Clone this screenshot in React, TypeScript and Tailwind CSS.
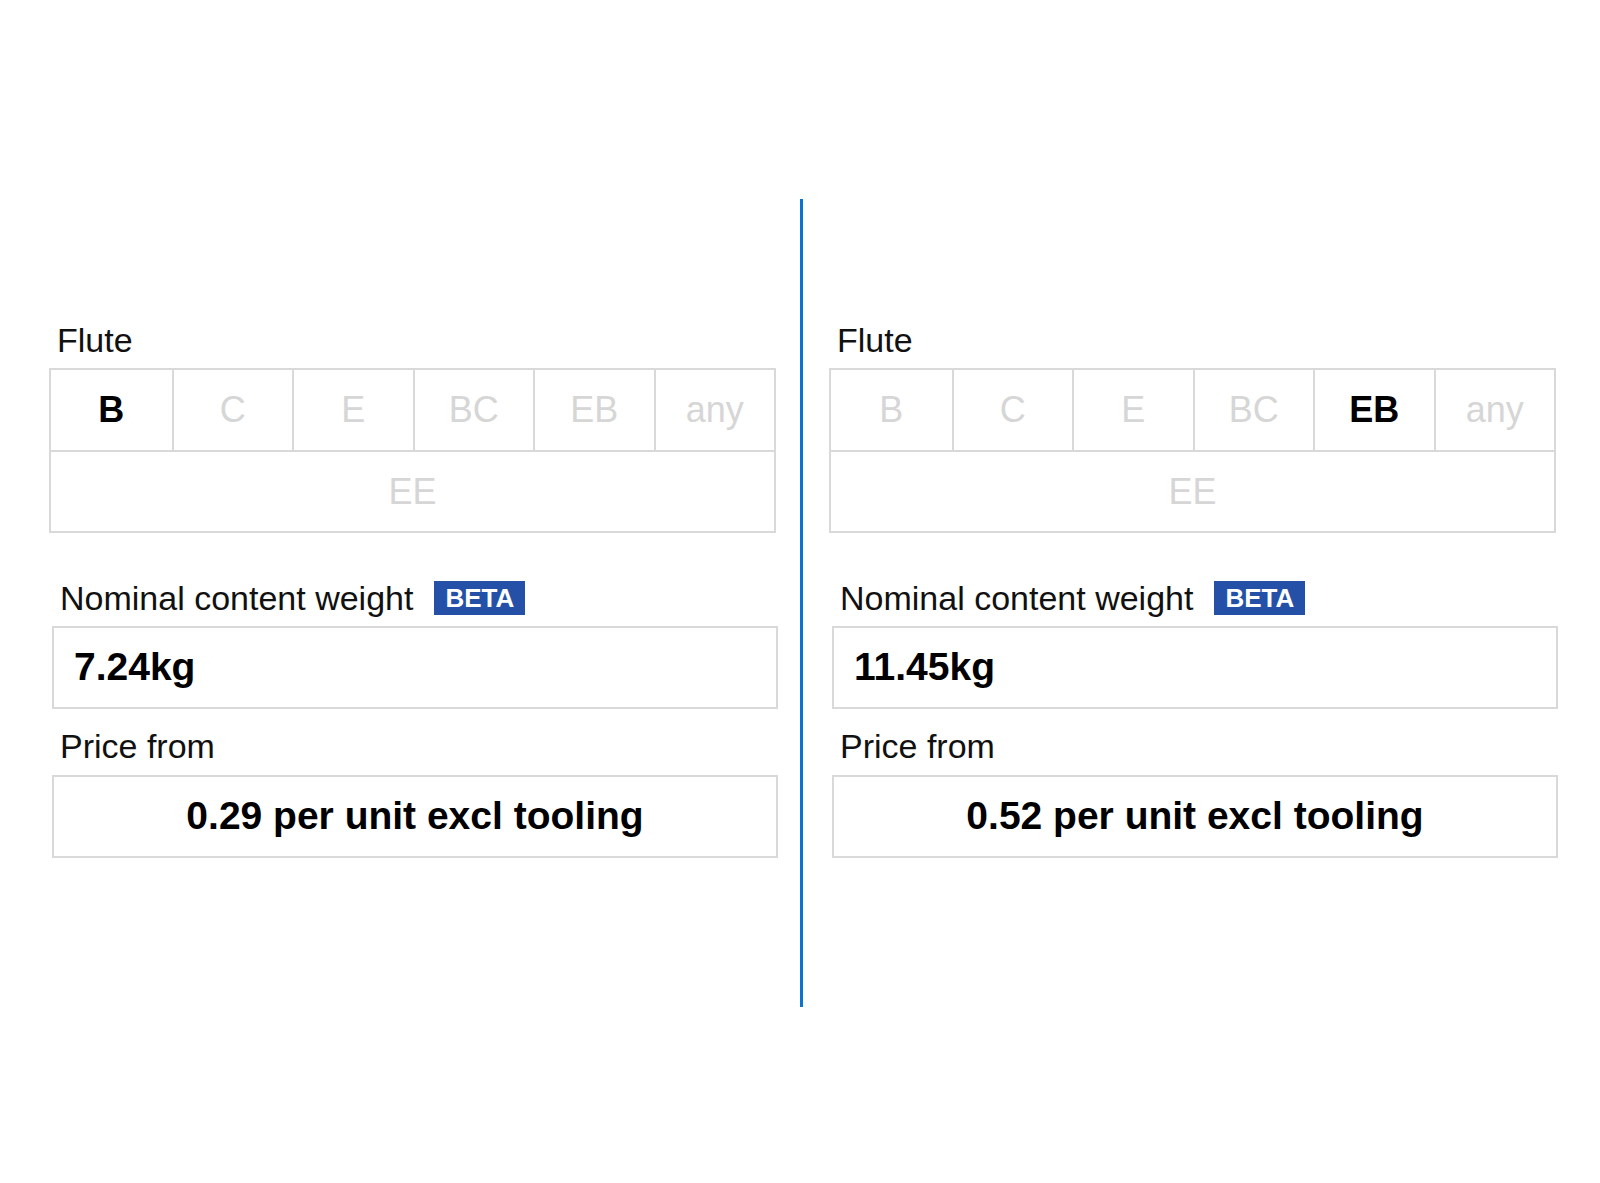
import React from 'react';

// Flute options shown in the top row of the selector
const FLUTES = ['B', 'C', 'E', 'BC', 'EB', 'any'];

interface PanelProps {
    selected: string;
    weight: string;
    price: string;
}

function FlutePanel({ selected, weight, price }: PanelProps) {
    return (
        <div className="w-[729px] pt-[121px]">
            <div className="h-[40px] pl-[8px] text-[34px] leading-[40px] text-[#111]">Flute</div>

            {/* Flute selector grid */}
            <div className="mt-[8px] w-[727px] border-2 border-[#d9d9d9]">
                <div className="grid h-[82px] grid-cols-6 border-b-2 border-[#d9d9d9]">
                    {FLUTES.map((f, i) => (
                        <div
                            key={f}
                            className={
                                'flex items-center justify-center text-[36px] ' +
                                (i > 0 ? 'border-l-2 border-[#d9d9d9] ' : '') +
                                (f === selected ? 'font-bold text-black' : 'text-[#d6d6d6]')
                            }
                        >
                            {f}
                        </div>
                    ))}
                </div>
                <div className="flex h-[79px] items-center justify-center text-[36px] text-[#d6d6d6]">EE</div>
            </div>

            {/* Nominal content weight */}
            <div className="mt-[45px] flex h-[40px] items-center pl-[11px]">
                <span className="text-[34px] leading-[40px] text-[#111]">Nominal content weight</span>
                <span className="ml-[21px] flex h-[34px] items-center bg-[#2450a8] px-[11px] text-[26px] font-bold text-white">
                    BETA
                </span>
            </div>
            <div className="ml-[3px] mt-[8px] flex h-[83px] w-[726px] items-center border-2 border-[#d9d9d9] pl-[20px] text-[39px] font-bold text-black">
                {weight}
            </div>

            {/* Price */}
            <div className="mt-[17px] h-[40px] pl-[11px] text-[34px] leading-[40px] text-[#111]">Price from</div>
            <div className="ml-[3px] mt-[9px] flex h-[83px] w-[726px] items-center justify-center border-2 border-[#d9d9d9] text-[39px] font-bold text-black">
                {price} per unit excl tooling
            </div>
        </div>
    );
}

export default function App() {
    return (
        <div
            className="h-[1183px] w-[1600px] bg-white"
            style={{ fontFamily: '"Liberation Sans", Arial, sans-serif' }}
        >
            <div className="flex pl-[49px] pt-[199px]">
                <FlutePanel selected="B" weight="7.24kg" price="0.29" />
                <div className="ml-[22px] h-[808px] w-[3px] bg-[#0a74d0]" />
                <div className="ml-[26px]">
                    <FlutePanel selected="EB" weight="11.45kg" price="0.52" />
                </div>
            </div>
        </div>
    );
}
